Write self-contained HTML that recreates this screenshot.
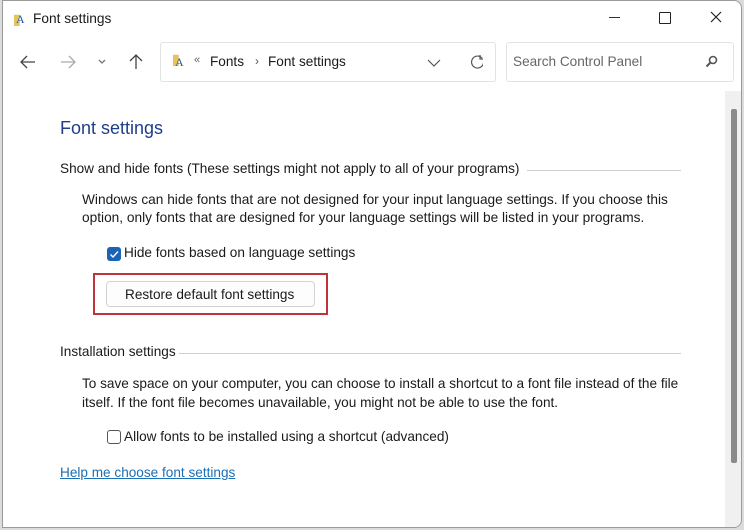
<!DOCTYPE html>
<html><head><style>
body{margin:0;width:744px;height:530px;background:#dcdcdc;position:relative;overflow:hidden;font-family:"Liberation Sans",sans-serif;}
.win{position:absolute;left:2px;top:0;width:740px;height:528px;background:#fff;border:1px solid #9a9a9a;border-radius:0 8px 8px 0;box-sizing:border-box;overflow:hidden}
.a{position:absolute;white-space:nowrap;color:#1a1a1a}
.t{font-size:13.6px}
.box{position:absolute;border:1px solid #e3e3e3;border-radius:3px;background:#fff;box-sizing:border-box}
.hr{position:absolute;height:1px;background:#d0d0d0}
</style></head><body>
<div class="win">
<div class="a" style="left:10px;top:10px;font-size:14px;color:#e8c25a;font-weight:bold">▮</div>
<div class="a" style="left:13px;top:11px;font-size:12px;color:#1f5fa8;font-family:'Liberation Serif'">A</div>
<div class="a" style="left:30px;top:10px;font-size:13.7px">Font settings</div>
<div style="position:absolute;left:606px;top:16px;width:11px;height:1px;background:#333"></div>
<div style="position:absolute;left:656px;top:11px;width:10px;height:10px;border:1.3px solid #222;border-radius:1px"></div>
<svg style="position:absolute;left:707px;top:10px" width="12" height="12"><path d="M1 1l10 10M11 1L1 11" stroke="#222" stroke-width="1.2"/></svg>
<svg style="position:absolute;left:0;top:40px" width="160" height="40"><g fill="none" stroke="#444" stroke-width="1.3"><path d="M18 21h14M24 15l-6 6 6 6"/><path d="M58 21h14M66 15l6 6-6 6" stroke="#aaa"/><path d="M96 19l3 3 3-3" stroke="#777"/><path d="M133 28V14M127 20l6-6 6 6"/></g></svg>
<div class="box" style="left:157px;top:41px;width:336px;height:40px"></div>
<div class="a" style="left:169px;top:50px;font-size:14px;color:#e8c25a;font-weight:bold">▮</div>
<div class="a" style="left:172px;top:54px;font-size:12px;color:#1f5fa8;font-family:'Liberation Serif'">A</div>
<div class="a" style="left:191px;top:53px;font-size:11px;color:#666">«</div>
<div class="a t" style="left:207px;top:53px">Fonts</div>
<div class="a" style="left:252px;top:53px;font-size:12px;color:#555">›</div>
<div class="a t" style="left:265px;top:53px">Font settings</div>
<svg style="position:absolute;left:420px;top:50px" width="60" height="24"><g fill="none" stroke="#555" stroke-width="1.2"><path d="M5 9l6 6 6-6"/><path d="M59 7a6 6 0 1 0 1.5 5"/><path d="M57 4v4h4" /></g></svg>
<div class="box" style="left:503px;top:41px;width:228px;height:40px"></div>
<div class="a t" style="left:510px;top:53px;color:#666">Search Control Panel</div>
<svg style="position:absolute;left:702px;top:54px" width="14" height="14"><circle cx="8" cy="5" r="3.5" fill="none" stroke="#555" stroke-width="1.6"/><path d="M5.5 7.5L1.5 11.5" stroke="#555" stroke-width="2"/></svg>
<div style="position:absolute;left:722px;top:90px;width:18px;height:438px;background:#f0f0f0"></div>
<div style="position:absolute;left:728px;top:108px;width:6px;height:354px;background:#8a8a8a;border-radius:2px"></div>
<div class="a" style="left:57px;top:117px;font-size:18px;color:#1e3e8c">Font settings</div>
<div class="a t" style="left:57px;top:160px">Show and hide fonts (These settings might not apply to all of your programs)</div>
<div class="hr" style="left:524px;top:169px;width:154px"></div>
<div class="a t" style="left:79px;top:190px;line-height:18px;font-size:13.7px">Windows can hide fonts that are not designed for your input language settings. If you choose this<br>option, only fonts that are designed for your language settings will be listed in your programs.</div>
<div style="position:absolute;left:104px;top:246px;width:14px;height:14px;background:#1a63b8;border-radius:3px"></div>
<svg style="position:absolute;left:104px;top:246px" width="14" height="14"><path d="M3.5 7.5l2.5 2.5 5-5.5" fill="none" stroke="#fff" stroke-width="1.4"/></svg>
<div class="a t" style="left:121px;top:244px">Hide fonts based on language settings</div>
<div style="position:absolute;left:90px;top:272px;width:235px;height:42px;border:2px solid #c0333a;box-sizing:border-box"></div>
<div style="position:absolute;left:103px;top:280px;width:209px;height:26px;border:1px solid #d3d3d3;border-radius:4px;background:#fdfdfd;box-sizing:border-box"></div>
<div class="a t" style="left:122px;top:286px">Restore default font settings</div>
<div class="a t" style="left:57px;top:343px">Installation settings</div>
<div class="hr" style="left:176px;top:352px;width:502px"></div>
<div class="a t" style="left:79px;top:373px;line-height:19px;font-size:13.6px">To save space on your computer, you can choose to install a shortcut to a font file instead of the file<br>itself. If the font file becomes unavailable, you might not be able to use the font.</div>
<div style="position:absolute;left:104px;top:429px;width:14px;height:14px;border:1px solid #555;border-radius:3px;box-sizing:border-box"></div>
<div class="a t" style="left:121px;top:428px">Allow fonts to be installed using a shortcut (advanced)</div>
<div class="a t" style="left:57px;top:464px;color:#1a6fb5;text-decoration:underline">Help me choose font settings</div>
</div>
</body></html>
